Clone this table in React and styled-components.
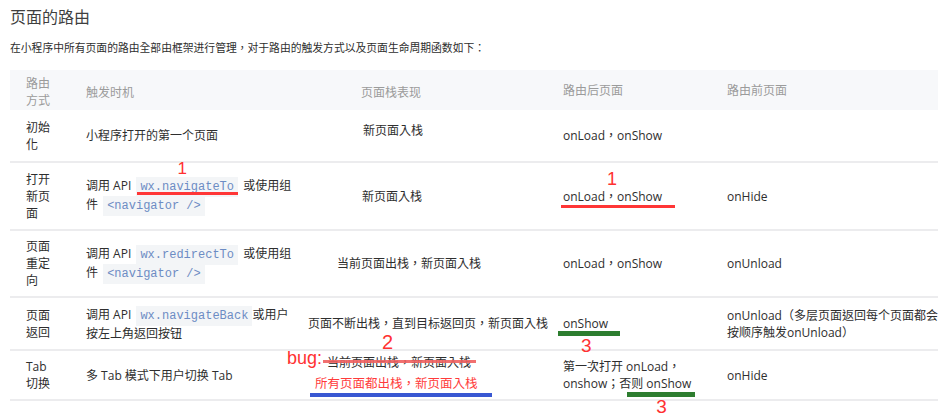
import React from 'react';
import styled, { createGlobalStyle } from 'styled-components';

const GlobalStyle = createGlobalStyle`
  body {
    margin: 0;
    background: #fff;
  }
`;

const Page = styled.div`
  box-sizing: border-box;
  min-height: 418px;
  padding: 6px 6px 0 10px;
  font-family: 'Open Sans', 'Noto Sans CJK TC', sans-serif;
  color: #2e2e2e;
`;

const Title = styled.h2`
  margin: 0;
  font-family: 'Noto Sans CJK TC', sans-serif;
  font-size: 16px;
  line-height: 20px;
  font-weight: normal;
  color: #3f3f3f;
`;

const Intro = styled.p`
  margin: 14px 0;
  font-size: 10.8px;
  line-height: 16px;
`;

const Table = styled.table`
  width: 928px;
  border-collapse: collapse;
  table-layout: fixed;
  font-size: 12px;
  line-height: 17px;
`;

const Col = styled.col`
  width: ${({ $w }) => $w}px;
`;

const HeadRow = styled.tr`
  height: 40px;
  background: #f7f8fa;
`;

const Th = styled.th`
  padding: ${({ $dy }) => $dy || 0}px 16px 0 16px;
  text-align: left;
  font-weight: normal;
  color: #9b9b9b;
  vertical-align: middle;
`;

const Row = styled.tr`
  height: ${({ $h }) => $h}px;
  border-bottom: 2px solid #ececee;
`;

const Cell = styled.td`
  position: relative;
  padding: 0 ${({ $pr }) => ($pr === undefined ? 16 : $pr)}px 0 16px;
  vertical-align: middle;
`;

const Lines = styled.div`
  white-space: nowrap;
`;

const StackText = styled.div`
  margin-left: ${({ $shift }) => $shift}px;
  margin-top: ${({ $lift }) => $lift || 0}px;
  white-space: nowrap;
`;

const Code = styled.code`
  position: relative;
  padding: 3px 4px;
  margin: 0 ${({ $mr }) => ($mr === undefined ? 2 : $mr)}px 0 2px;
  font-family: 'Liberation Mono', monospace;
  font-size: 12px;
  color: #6d8cc4;
  background: #f3f5f7;
`;

const Marked = styled.span`
  position: relative;
`;

const Fix = styled.span`
  position: relative;
  font-size: 12.5px;
  color: #ff3b3b;
`;

const Bar = styled.span`
  position: absolute;
  left: ${({ $l }) => $l}px;
  right: ${({ $r }) => $r}px;
  top: ${({ $t }) => $t}px;
  height: ${({ $h }) => $h}px;
  background: ${({ $c }) => $c};
`;

const Note = styled.span`
  position: absolute;
  left: ${({ $l }) => $l}px;
  top: ${({ $t }) => $t}px;
  font-family: 'Liberation Sans', Arial, sans-serif;
  font-size: ${({ $size }) => $size}px;
  line-height: ${({ $size }) => $size}px;
  color: #ff3131;
  white-space: nowrap;
`;

const RED = '#ff3636';
const GREEN = '#2d7d2f';
const BLUE = '#3857d2';

const App = () => (
  <Page>
    <GlobalStyle />
    <Title>页面的路由</Title>
    <Intro>
      在小程序中所有页面的路由全部由框架进行管理，对于路由的触发方式以及页面生命周期函数如下：
    </Intro>
    <Table>
      <colgroup>
        <Col $w={60} />
        <Col $w={275} />
        <Col $w={202} />
        <Col $w={164} />
        <Col $w={227} />
      </colgroup>
      <thead>
        <HeadRow>
          <Th $dy={3}>路由方式</Th>
          <Th $dy={4}>触发时机</Th>
          <Th $dy={4}>页面栈表现</Th>
          <Th>路由后页面</Th>
          <Th>路由前页面</Th>
        </HeadRow>
      </thead>
      <tbody>
        <Row $h={52}>
          <Cell>初始化</Cell>
          <Cell>小程序打开的第一个页面</Cell>
          <Cell>
            <StackText $shift={2} $lift={-10}>新页面入栈</StackText>
          </Cell>
          <Cell>onLoad，onShow</Cell>
          <Cell></Cell>
        </Row>
        <Row $h={68}>
          <Cell>打开新页面</Cell>
          <Cell>
            <Lines>
              调用 API{' '}
              <Code>
                wx.navigateTo
                <Note $l={41} $t={-17} $size={17}>1</Note>
                <Bar $l={1} $r={0} $t={15} $h={3} $c={RED} />
              </Code>{' '}
              或使用组
              <br />
              件 <Code>&lt;navigator /&gt;</Code>
            </Lines>
          </Cell>
          <Cell>
            <StackText $shift={1}>新页面入栈</StackText>
          </Cell>
          <Cell>
            <Marked>
              onLoad，onShow
              <Note $l={44} $t={-18} $size={18}>1</Note>
              <Bar $l={-2} $r={-13} $t={17} $h={3} $c={RED} />
            </Marked>
          </Cell>
          <Cell>onHide</Cell>
        </Row>
        <Row $h={67}>
          <Cell>页面重定向</Cell>
          <Cell>
            <Lines>
              调用 API <Code>wx.redirectTo</Code> 或使用组
              <br />
              件 <Code>&lt;navigator /&gt;</Code>
            </Lines>
          </Cell>
          <Cell>
            <StackText $shift={-24}>当前页面出栈，新页面入栈</StackText>
          </Cell>
          <Cell>onLoad，onShow</Cell>
          <Cell>onUnload</Cell>
        </Row>
        <Row $h={53}>
          <Cell>页面返回</Cell>
          <Cell>
            <Lines>
              调用 API <Code $mr={0}>wx.navigateBack</Code>或用户
              <br />
              按左上角返回按钮
            </Lines>
          </Cell>
          <Cell>
            <StackText $shift={-53}>
              页面不断出栈，直到目标返回页，新页面入栈
            </StackText>
          </Cell>
          <Cell>
            <Marked>
              onShow
              <Note $l={18} $t={21} $size={19}>3</Note>
              <Bar $l={-5} $r={-12} $t={16} $h={5} $c={GREEN} />
            </Marked>
          </Cell>
          <Cell $pr={0}>
            <Lines>
              onUnload（多层页面返回每个页面都会
              <br />
              按顺序触发onUnload）
            </Lines>
          </Cell>
        </Row>
        <Row $h={50}>
          <Cell>Tab 切换</Cell>
          <Cell>多 Tab 模式下用户切换 Tab</Cell>
          <Cell>
            <StackText $shift={-34} $lift={-5}>
              <Marked>
                当前页面出栈，新页面入栈
                <Note $l={-40} $t={-5} $size={18}>bug:</Note>
                <Note $l={55} $t={-22} $size={20}>2</Note>
                <Bar $l={-4} $r={-5} $t={6} $h={3} $c="rgba(240, 96, 96, 0.9)" />
              </Marked>
            </StackText>
            <StackText $shift={-46} $lift={4}>
              <Fix>
                所有页面都出栈，新页面入栈
                <Bar $l={-5} $r={-14} $t={18} $h={4} $c={BLUE} />
              </Fix>
            </StackText>
          </Cell>
          <Cell>
            <Lines>
              第一次打开 onLoad，
              <br />
              onshow；否则{' '}
              <Marked>
                onShow
                <Note $l={10} $t={22} $size={19}>3</Note>
                <Bar $l={-19} $r={-4} $t={17} $h={5} $c={GREEN} />
              </Marked>
            </Lines>
          </Cell>
          <Cell>onHide</Cell>
        </Row>
      </tbody>
    </Table>
  </Page>
);

export default App;
